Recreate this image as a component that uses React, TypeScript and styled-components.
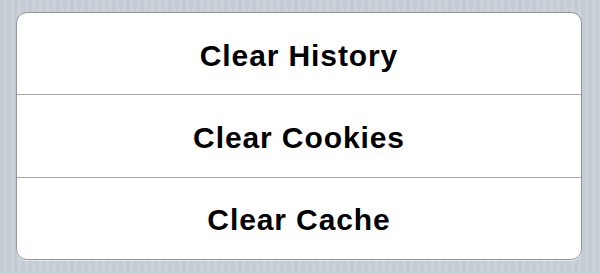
import React from "react";
import styled, { createGlobalStyle } from "styled-components";

const Global = createGlobalStyle`
  html, body {
    margin: 0;
    padding: 0;
  }
  body {
    width: 600px;
    height: 274px;
    overflow: hidden;
    background-color: #c8cfd6;
    background-image: repeating-linear-gradient(
      to right,
      #c5ccd4 0px,
      #c5ccd4 4px,
      #cbd2d9 4px,
      #cbd2d9 7px
    );
    font-family: "Liberation Sans", Arial, Helvetica, sans-serif;
  }
`;

const Page = styled.div`
  box-sizing: border-box;
  width: 600px;
  height: 274px;
  padding: 12px 18px 14px 16px;
  display: flex;
`;

const Card = styled.div`
  flex: 1;
  display: flex;
  flex-direction: column;
  background: #ffffff;
  border: 1px solid #92969b;
  border-radius: 11px;
  overflow: hidden;
  box-shadow: 0 1px 0 rgba(255, 255, 255, 0.55);
`;

const Row = styled.button`
  flex: 1;
  display: flex;
  align-items: center;
  justify-content: center;
  padding: 0;
  margin: 0;
  border: none;
  border-top: 1px solid #a8a8a8;
  background: transparent;
  font-family: "Liberation Sans", Arial, Helvetica, sans-serif;
  font-weight: bold;
  font-size: 30px;
  letter-spacing: 0.9px;
  color: #000000;
  cursor: pointer;
  &:first-child {
    border-top: none;
  }
`;

const Label = styled.span`
  position: relative;
  top: 2px;
`;

const items = ["Clear History", "Clear Cookies", "Clear Cache"];

export default function App() {
  return (
    <>
      <Global />
      <Page>
        <Card>
          {items.map((t) => (
            <Row key={t}>
              <Label>{t}</Label>
            </Row>
          ))}
        </Card>
      </Page>
    </>
  );
}
